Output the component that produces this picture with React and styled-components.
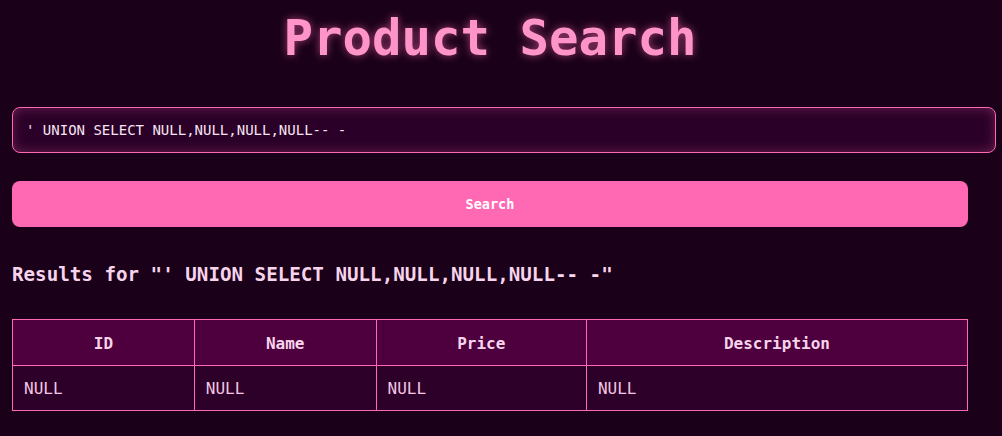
import React from "react";
import styled, { createGlobalStyle } from "styled-components";

const Global = createGlobalStyle`
  html, body { margin: 0; padding: 0; background: #1a0019; }
  body { font-family: "DejaVu Sans Mono", monospace; color: #f7d4ec; }
`;

const Page = styled.div`
  padding: 0 34px 0 12px;
`;

const Title = styled.h1`
  margin: 0;
  padding-top: 11px;
  text-align: center;
  font-size: 49px;
  font-weight: bold;
  line-height: 56px;
  color: #ff94c8;
  text-shadow: 0 0 8px rgba(255, 105, 180, 0.6);
`;

const Input = styled.input`
  display: block;
  margin-top: 40px;
  width: 100%;
  padding: 14px 13px;
  font-family: "DejaVu Sans Mono", monospace;
  font-size: 14px;
  line-height: 16px;
  color: #f7e6f2;
  background: #2b0028;
  border: 1px solid #ff69b4;
  border-radius: 8px;
  box-shadow: inset 0 0 12px rgba(255, 105, 180, 0.3);
  outline: none;
`;

const Button = styled.button`
  display: block;
  margin-top: 28px;
  width: 100%;
  height: 46px;
  font-family: "DejaVu Sans Mono", monospace;
  font-size: 13.5px;
  font-weight: bold;
  color: #fff;
  background: #ff69b4;
  border: none;
  border-radius: 8px;
`;

const Heading = styled.h2`
  margin: 36px 0 0;
  font-size: 19.2px;
  font-weight: bold;
  line-height: 24px;
  color: #f7d4ec;
`;

const Table = styled.table`
  margin-top: 32px;
  width: 100%;
  border-collapse: collapse;
`;

const Th = styled.th`
  padding: 13px 11px 11px;
  font-size: 16px;
  font-weight: bold;
  line-height: 21px;
  text-align: center;
  color: #f7d4ec;
  background: #4d003d;
  border: 1px solid #ff69b4;
`;

const Td = styled.td`
  padding: 13px 11px 11px;
  font-size: 16px;
  line-height: 20px;
  color: #f2c8e4;
  background: #2d0029;
  border: 1px solid #ff69b4;
`;

const query = "' UNION SELECT NULL,NULL,NULL,NULL-- -";
const columns = ["ID", "Name", "Price", "Description"];

export default function App() {
  return (
    <>
      <Global />
      <Page>
        <Title>Product Search</Title>
        <Input defaultValue={query} />
        <Button>Search</Button>
        <Heading>Results for "{query}"</Heading>
        <Table>
          <thead>
            <tr>
              {columns.map((c) => (
                <Th key={c}>{c}</Th>
              ))}
            </tr>
          </thead>
          <tbody>
            <tr>
              {columns.map((c) => (
                <Td key={c}>NULL</Td>
              ))}
            </tr>
          </tbody>
        </Table>
      </Page>
    </>
  );
}
